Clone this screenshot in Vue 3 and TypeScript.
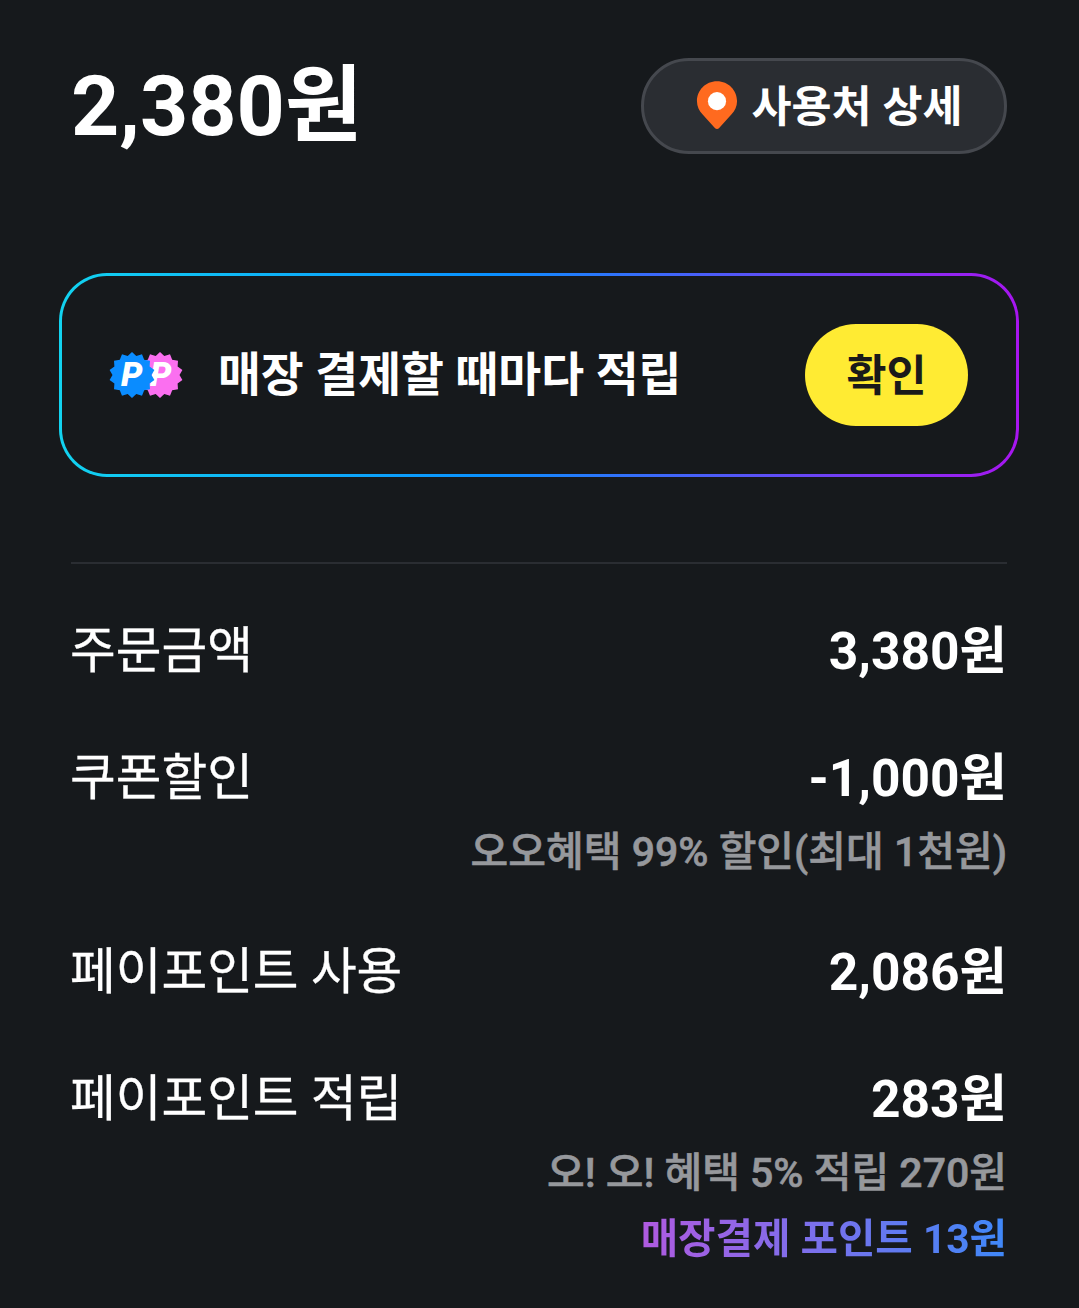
<template>
  <div class="page">
    <header class="top">
      <h1>2,380원</h1>
      <button class="place-btn">
        <svg width="42" height="50" viewBox="0 0 44 52">
          <path d="M22 1C10 1 1 10.500 1 22c0 5.500 2.500 10 5.500 13.500L19.500 49.800c1.700 1.800 3.400 1.800 5 0L37.500 35.500C40.500 32 43 27.500 43 22 43 10.500 34 1 22 1Z" fill="#ff6a1f" />
          <circle cx="22" cy="22" r="9.500" fill="#fff" />
        </svg>
        <span>사용처 상세</span>
      </button>
    </header>

    <section class="promo">
      <div class="promo-inner">
        <svg class="badges" width="74" height="48" viewBox="0 0 74 48">
          <polygon :points="starRight" fill="#fb6ff0" />
          <text x="41" y="35" class="p-mark">P</text>
          <polygon :points="starLeft" fill="#0a8cff" />
          <text x="12" y="35" class="p-mark">P</text>
        </svg>
        <p class="promo-text">매장 결제할 때마다 적립</p>
        <button class="confirm">확인</button>
      </div>
    </section>

    <div class="divider"></div>

    <section class="rows">
      <div v-for="row in rows" :key="row.label" class="row">
        <div class="row-main">
          <span class="label">{{ row.label }}</span>
          <span class="value">{{ row.value }}</span>
        </div>
        <p v-for="note in row.notes" :key="note" class="note">{{ note }}</p>
        <p v-if="row.gradientNote" class="note gradient">{{ row.gradientNote }}</p>
      </div>
    </section>
  </div>
</template>

<script setup lang="ts">
interface Row {
  label: string;
  value: string;
  notes?: string[];
  gradientNote?: string;
}

const rows: Row[] = [
  { label: "주문금액", value: "3,380원" },
  { label: "쿠폰할인", value: "-1,000원", notes: ["오오혜택 99% 할인(최대 1천원)"] },
  { label: "페이포인트 사용", value: "2,086원" },
  {
    label: "페이포인트 적립",
    value: "283원",
    notes: ["오! 오! 혜택 5% 적립 270원"],
    gradientNote: "매장결제 포인트 13원",
  },
];

function star(cx: number, cy: number, outer: number, inner: number, spikes: number): string {
  const pts: string[] = [];
  for (let i = 0; i < spikes * 2; i++) {
    const r = i % 2 === 0 ? outer : inner;
    const a = (Math.PI * i) / spikes - Math.PI / 2;
    pts.push(`${(cx + r * Math.cos(a)).toFixed(1)},${(cy + r * Math.sin(a)).toFixed(1)}`);
  }
  return pts.join(" ");
}

const starLeft = star(23, 24, 23, 19.5, 14);
const starRight = star(51, 24, 23, 19.5, 14);
</script>

<style>
body {
  background: #16191c;
}
</style>

<style scoped>
.page {
  width: 1079px;
  height: 1308px;
  box-sizing: border-box;
  padding: 58px 72px 0 71px;
  background: #16191c;
  color: #fff;
  font-family: Roboto, "Noto Sans CJK KR", sans-serif;
  overflow: hidden;
}
.top {
  display: flex;
  justify-content: space-between;
  align-items: center;
  height: 95px;
}
h1 {
  margin: 3px 0 0;
  font-size: 84.200px;
  font-weight: 700;
  line-height: 92px;
}
.place-btn {
  display: flex;
  align-items: center;
  justify-content: center;
  gap: 14px;
  width: 366px;
  height: 96px;
  box-sizing: border-box;
  border: 3px solid #45484e;
  border-radius: 48px;
  background: #2a2d32;
  color: #fff;
  font-family: inherit;
  font-size: 43.500px;
  font-weight: 700;
  padding: 0 0 2px 10px;
}
.place-btn span {
  position: relative;
  top: -1px;
}
.promo {
  margin: 120px -12px 0 -12px;
  height: 204px;
  padding: 3px;
  box-sizing: border-box;
  border-radius: 48px;
  background: linear-gradient(90deg, #12d3f0 0%, #0a90ff 45%, #a815f0 100%);
}
.promo-inner {
  display: flex;
  align-items: center;
  height: 100%;
  box-sizing: border-box;
  padding: 0 48px 0 47px;
  border-radius: 45px;
  background: #16191c;
}
.badges {
  flex: none;
}
.p-mark {
  font-family: Roboto, sans-serif;
  font-size: 34px;
  font-weight: 900;
  font-style: italic;
  fill: #fff;
}
.promo-text {
  flex: 1;
  margin: -9px 0 0 35px;
  font-size: 46.600px;
  font-weight: 700;
}
.confirm {
  width: 163px;
  height: 102px;
  border: none;
  border-radius: 51px;
  background: #ffeb33;
  color: #1a1a1a;
  font-family: inherit;
  font-size: 43.500px;
  font-weight: 700;
  padding: 0 0 6px;
}
.divider {
  height: 2px;
  margin-top: 85px;
  background: #2a2d32;
}
.rows {
  padding-top: 51px;
}
.row {
  margin-bottom: 65px;
}
.row-main {
  display: flex;
  justify-content: space-between;
  align-items: center;
  height: 62px;
  font-size: 49.700px;
}
.label {
  margin-left: -1px;
  -webkit-text-stroke: 0.3px #fff;
}
.value {
  font-size: 51.500px;
  font-weight: 700;
}
.note {
  margin: 21px 0 0;
  height: 55px;
  line-height: 55px;
  text-align: right;
  font-size: 41px;
  font-weight: 500;
  -webkit-text-stroke: 0.6px #96989c;
  color: #96989c;
}
.note + .note {
  margin-top: 11px;
}
.row:has(.note) {
  margin-bottom: 56px;
}
.gradient {
  width: fit-content;
  margin-left: auto;
  font-size: 40.700px;
  font-weight: 700;
  -webkit-text-stroke: 0;
  background: linear-gradient(90deg, #b05ae0 0%, #3f88f8 100%);
  -webkit-background-clip: text;
  background-clip: text;
  color: transparent;
}
</style>
